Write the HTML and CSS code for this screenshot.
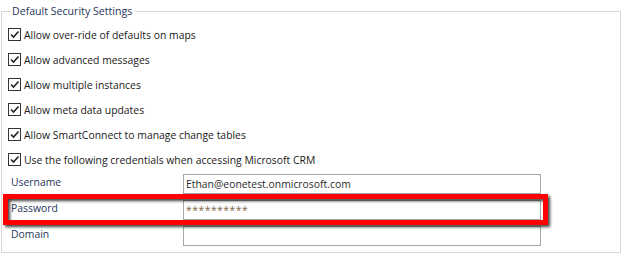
FILE: index.html
```html
<!DOCTYPE html>
<html lang="en">
<head>
<meta charset="UTF-8">
<title>Default Security Settings</title>
<link rel="stylesheet" href="styles.css">
</head>
<body>
<fieldset class="group">
    <legend>Default Security Settings</legend>
    <div class="checks">
        <label class="check"><span class="box"><svg viewBox="0 0 11 11"><path d="M2 5.5 L4.5 8 L9.5 2.5"/></svg></span>Allow over-ride of defaults on maps</label>
        <label class="check"><span class="box"><svg viewBox="0 0 11 11"><path d="M2 5.5 L4.5 8 L9.5 2.5"/></svg></span>Allow advanced messages</label>
        <label class="check"><span class="box"><svg viewBox="0 0 11 11"><path d="M2 5.5 L4.5 8 L9.5 2.5"/></svg></span>Allow multiple instances</label>
        <label class="check"><span class="box"><svg viewBox="0 0 11 11"><path d="M2 5.5 L4.5 8 L9.5 2.5"/></svg></span>Allow meta data updates</label>
        <label class="check"><span class="box"><svg viewBox="0 0 11 11"><path d="M2 5.5 L4.5 8 L9.5 2.5"/></svg></span>Allow SmartConnect to manage change tables</label>
        <label class="check"><span class="box"><svg viewBox="0 0 11 11"><path d="M2 5.5 L4.5 8 L9.5 2.5"/></svg></span>Use the following credentials when accessing Microsoft CRM</label>
    </div>
    <div class="creds">
        <div class="row">
            <span class="lbl">Username</span>
            <div class="field">Ethan@eonetest.onmicrosoft.com</div>
        </div>
        <div class="row marked">
            <span class="lbl">Password</span>
            <div class="field secret">**********</div>
            <div class="highlight"></div>
        </div>
        <div class="row">
            <span class="lbl">Domain</span>
            <div class="field"></div>
        </div>
    </div>
</fieldset>
</body>
</html>
```

FILE: styles.css
```css
/* settings panel */
body {
    margin: 0;
    background: #ffffff;
    font-family: "Open Sans", "Noto Sans", sans-serif;
    font-size: 10.4px;
    color: #1a1a1a;
}
.group {
    margin: 4px 1px 0 1px;
    padding: 0 6px 6px 6px;
    border: 1px solid #d8d8d8;
    height: 249px;
    box-sizing: border-box;
}
.group legend {
    margin-left: 3px;
    padding: 0 3px 0 1px;
    color: #27365c;
    line-height: 15px;
    font-size: 10.6px;
}
.checks {
    display: flex;
    flex-direction: column;
    margin-top: 3px;
}
.check {
    display: flex;
    align-items: center;
    height: 25px;
    gap: 3px;
}
.box {
    width: 11px;
    height: 11px;
    border: 1px solid #333333;
    background: #ffffff;
    display: flex;
}
.box svg {
    width: 11px;
    height: 11px;
    fill: none;
    stroke: #222222;
    stroke-width: 1.6;
}
.creds {
    display: flex;
    flex-direction: column;
    gap: 6px;
    margin-top: 2px;
}
.row {
    display: grid;
    grid-template-columns: 175px 358px;
    height: 20px;
}
.lbl {
    padding-left: 3px;
    color: #27365c;
    line-height: 16px;
}
.field {
    border: 1px solid #a8a8a8;
    padding: 0 2px;
    line-height: 18px;
    color: #2b2b2b;
}
.secret {
    color: #7d6446;
    letter-spacing: 0.5px;
}
.marked {
    position: relative;
}
.highlight {
    position: absolute;
    left: -5px;
    top: -6px;
    width: 545px;
    height: 31px;
    box-sizing: border-box;
    border: 5px solid #ff0000;
    filter: drop-shadow(2px 2px 1.5px rgba(0, 0, 0, 0.75));
}
```
